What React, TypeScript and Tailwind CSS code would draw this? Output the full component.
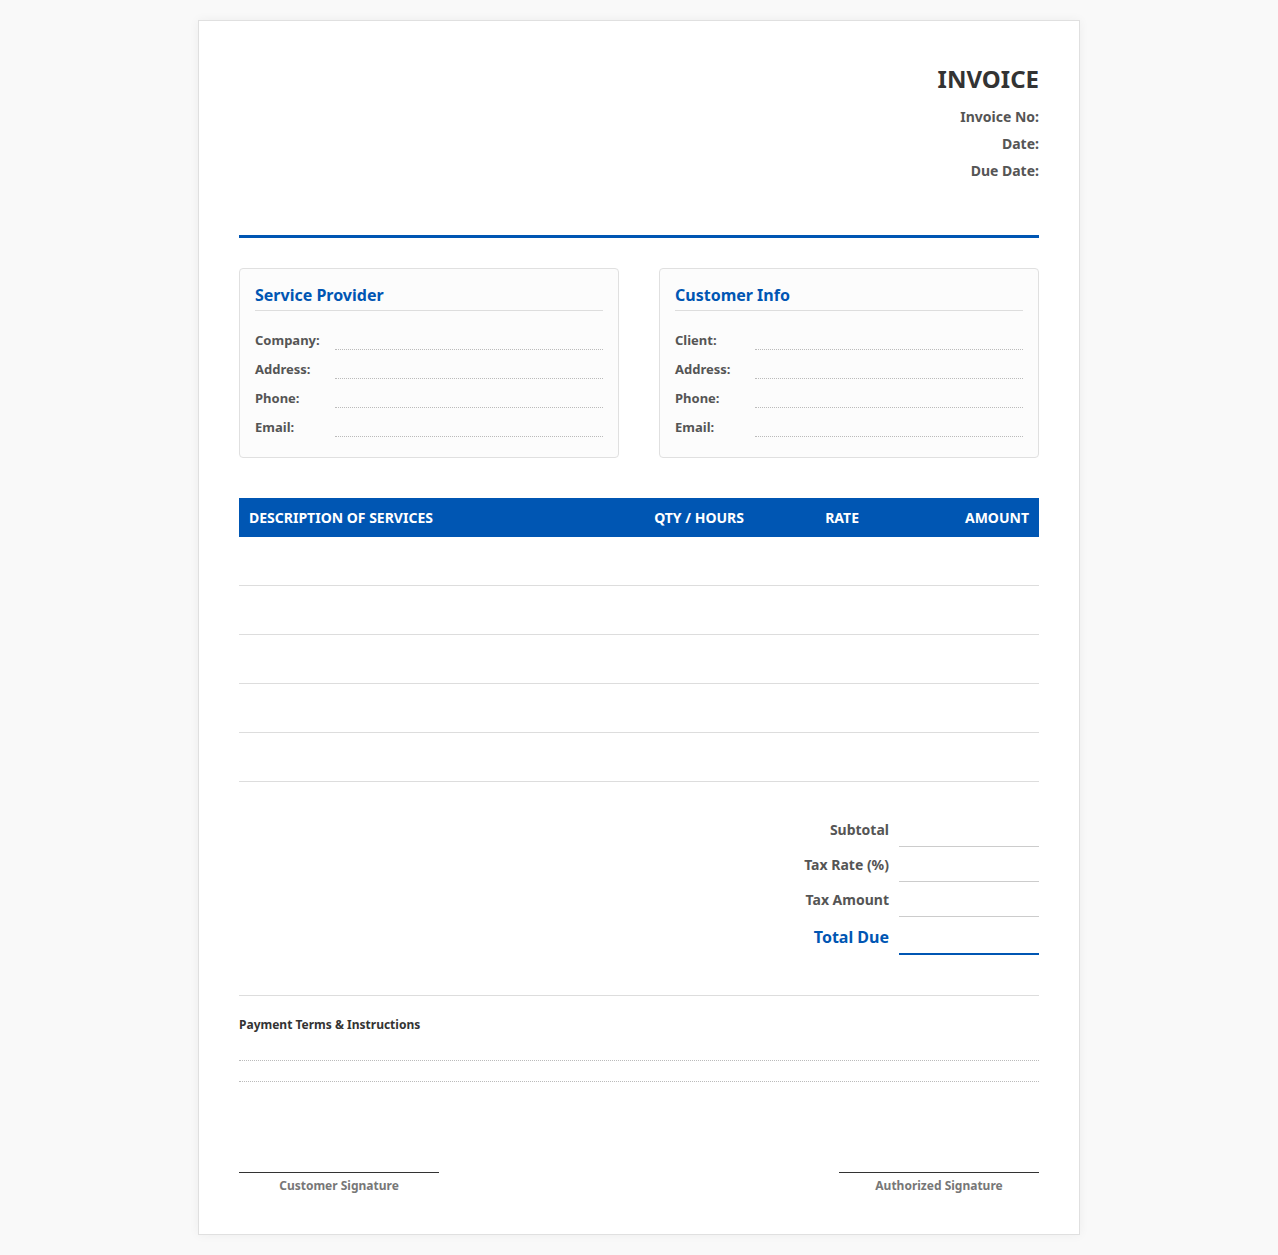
const font = "[font-family:'Noto_Sans',sans-serif]"

function InfoBox({ title, labels }: { title: string; labels: string[] }) {
  return (
    <div className="h-[190px] w-[380px] rounded border border-[#e0e0e0] bg-[#fcfcfc] px-[15px] pt-[15px]">
      <h3 className="h-[27px] border-b border-[#dddddd] text-[16px] leading-[22px] font-bold text-[#0056b3]">{title}</h3>
      <div className="mt-[10px]">
        {labels.map((label) => (
          <div key={label} className="flex h-[29px] items-end">
            <span className="w-[80px] pb-[1px] text-[13px] leading-[18px] font-bold text-[#555555]">{label}</span>
            <span className="h-[28px] flex-1 border-b border-dotted border-[#bbbbbb]" />
          </div>
        ))}
      </div>
    </div>
  )
}

function TotalRow({ label, total }: { label: string; total?: boolean }) {
  return (
    <div className={total ? "flex h-[38px] items-stretch" : "flex h-[35px] items-stretch"}>
      <span
        className={
          total
            ? "flex w-[200px] items-center justify-end pt-[2px] pr-[10px] text-[16px] font-bold text-[#0056b3]"
            : "flex w-[200px] items-center justify-end pr-[10px] text-[14px] font-bold text-[#555555]"
        }
      >
        {label}
      </span>
      <span className={total ? "w-[140px] border-b-2 border-[#0056b3]" : "w-[140px] border-b border-[#cccccc]"} />
    </div>
  )
}

function Signature({ label }: { label: string }) {
  return (
    <div className="w-[200px] border-t border-[#333333] pt-[5px] text-center text-[12px] leading-[16px] font-bold text-[#777777]">
      {label}
    </div>
  )
}

export default function App() {
  return (
    <div className={`${font} min-h-[1255px] bg-[#f9f9f9] pt-[20px] pb-[20px]`}>
      <div className="mx-auto h-[1215px] w-[882px] border border-[#e0e0e0] bg-white px-[40px] pt-[40px] shadow-[0_0_10px_rgba(0,0,0,0.05)]">
        <header className="h-[177px] border-b-[3px] border-[#0056b3] text-right">
          <h1 className="h-[36px] text-[24px] leading-[36px] font-bold text-[#333333]">INVOICE</h1>
          <div className="mt-[6px] text-[14px] leading-[27px] font-bold text-[#555555]">
            <p>Invoice No:</p>
            <p>Date:</p>
            <p>Due Date:</p>
          </div>
        </header>

        <section className="mt-[30px] flex justify-between">
          <InfoBox title="Service Provider" labels={["Company:", "Address:", "Phone:", "Email:"]} />
          <InfoBox title="Customer Info" labels={["Client:", "Address:", "Phone:", "Email:"]} />
        </section>

        <section className="mt-[40px]">
          <div className="flex h-[39px] items-center bg-[#0056b3] px-[10px] text-[14px] font-bold text-white">
            <span className="flex-1">DESCRIPTION OF SERVICES</span>
            <span className="w-[160px] pr-[25px] text-right">QTY / HOURS</span>
            <span className="w-[100px] pr-[10px] text-right">RATE</span>
            <span className="w-[160px] text-right">AMOUNT</span>
          </div>
          {[0, 1, 2, 3, 4].map((row) => (
            <div key={row} className="h-[49px] border-b border-[#dddddd]" />
          ))}
        </section>

        <section className="mt-[30px] flex flex-col items-end">
          <TotalRow label="Subtotal" />
          <TotalRow label="Tax Rate (%)" />
          <TotalRow label="Tax Amount" />
          <TotalRow label="Total Due" total />
        </section>

        <section className="mt-[40px] border-t border-[#dddddd] pt-[20px]">
          <h4 className="text-[12px] leading-[18px] font-bold text-[#333333]">Payment Terms &amp; Instructions</h4>
          <div className="mt-[17px] h-[10px] border-b border-dotted border-[#bbbbbb]" />
          <div className="mt-[10px] h-[11px] border-b border-dotted border-[#bbbbbb]" />
        </section>

        <footer className="mt-[90px] flex justify-between">
          <Signature label="Customer Signature" />
          <Signature label="Authorized Signature" />
        </footer>
      </div>
    </div>
  )
}
